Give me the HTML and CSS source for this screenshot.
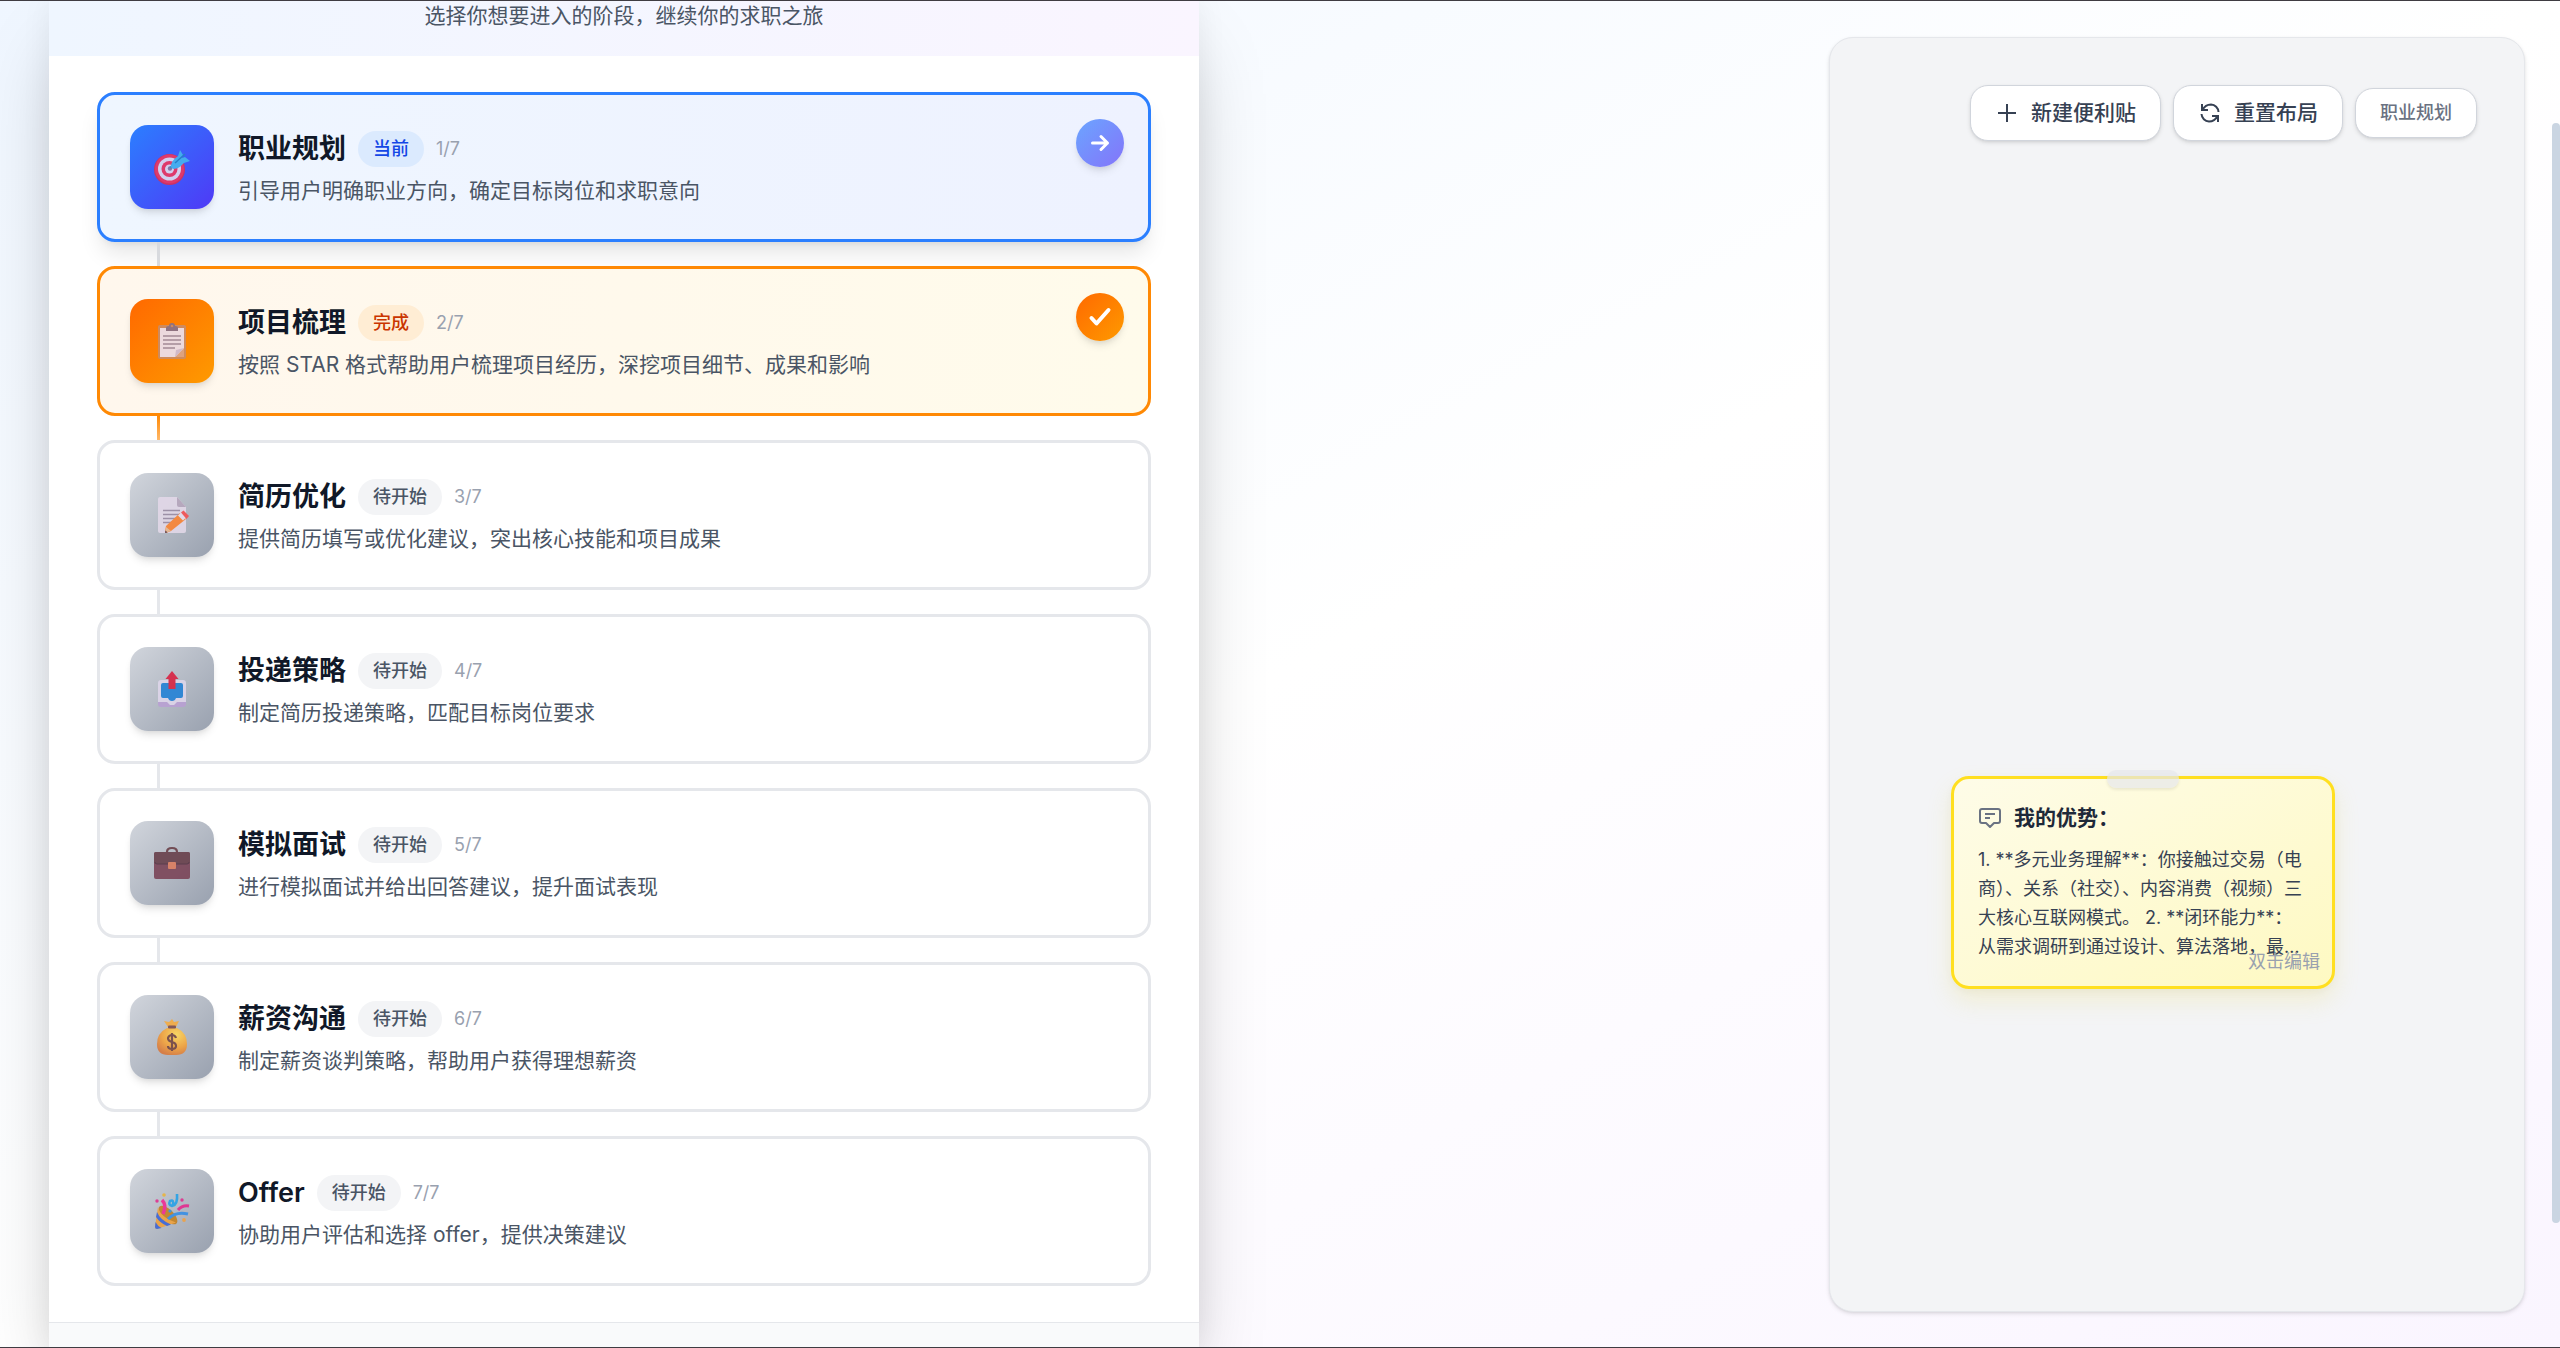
FILE: index.html
```html
<!DOCTYPE html>
<html lang="zh-CN">
<head>
<meta charset="utf-8">
<meta name="viewport" content="width=device-width, initial-scale=1">
<title>求职阶段</title>
<link rel="stylesheet" href="styles.css">
</head>
<body>
<div class="page">
  <main class="panel">
    <header class="panel-head"><p>选择你想要进入的阶段，继续你的求职之旅</p></header>
    <ol class="stages">
      <li class="stage current">
        <span class="icon"><svg viewBox="0 0 36 36" aria-hidden="true">
          <ellipse cx="15.500" cy="20.500" rx="15.500" ry="15.500" fill="#d92f55"/><circle cx="15.500" cy="20" r="14.500" fill="#f0365d"/><circle cx="15.500" cy="20" r="11.500" fill="#e3dcee"/><circle cx="15.500" cy="20" r="8" fill="#f0365d"/><circle cx="15.500" cy="20" r="4.500" fill="#e3dcee"/><circle cx="16" cy="19.500" r="2.200" fill="#8d7c9c"/>
          <path d="M16 19 28 7" stroke="#3b8fc4" stroke-width="2"/><path d="M17 18c0-5 3-8 7-11l2-6 3 5-1 3 3-1 5 4-6 2c-3 3-6 6-11 6z" fill="#45b5ee"/><path d="m21 14 10-9" stroke="#2383c4" stroke-width="1.500"/></svg></span>
        <div class="body"><div class="row"><h2>职业规划</h2><span class="badge">当前</span><span class="count">1/7</span></div><p>引导用户明确职业方向，确定目标岗位和求职意向</p></div>
        <button class="mark" type="button" aria-label="进入职业规划"><svg viewBox="0 0 24 24" aria-hidden="true"><path d="M4.500 12h15M13 5.500l6.500 6.500-6.500 6.500"/></svg></button>
      </li>
      <li class="stage done">
        <span class="icon"><svg viewBox="0 0 36 36" aria-hidden="true">
          <rect x="4" y="2" width="28" height="34" rx="2" fill="#c98c69"/><path d="M6 5h24v21l-8 8H6z" fill="#ebe3f5"/><path d="M30 25v9h-9z" fill="#dba58c"/><path d="m21 34 1-7 8-2z" fill="#cdbfdf"/><path d="M12 8V5q0-2 3-2 0-3 3-3t3 3q3 0 3 2v3z" fill="#83718e"/><circle cx="18" cy="3" r="1.300" fill="#c98c69"/><path d="M9 13h18M9 17h18M9 21h18M9 25h12" stroke="#9a8ca7" stroke-width="1.300"/></svg></span>
        <div class="body"><div class="row"><h2>项目梳理</h2><span class="badge">完成</span><span class="count">2/7</span></div><p>按照 STAR 格式帮助用户梳理项目经历，深挖项目细节、成果和影响</p></div>
        <span class="mark"><svg viewBox="0 0 24 24" aria-hidden="true"><path class="tick" d="m3.500 13 5 5.500L20.500 5"/></svg></span>
      </li>
      <li class="stage">
        <span class="icon"><svg viewBox="0 0 36 36" aria-hidden="true">
          <path d="M4 2q0-2 2-2h17l9 10v24q0 2-2 2H6q-2 0-2-2z" fill="#e2d8e8"/><path d="M23 0v8q0 2 2 2h7z" fill="#b6a6bd"/><path d="M9 13.500h17M9 17.500h17M9 21.500h14M9 25.500h9" stroke="#9a8ca4" stroke-width="1.300"/><path d="m11 34 1-5 14-13 6 6-15 12-5 2z" fill="#fb8434"/><path d="m11 36 1-6 5 4z" fill="#e8b891"/><path d="m11 36 .5-2.500 2 2z" fill="#50333f"/><path d="m24 18.500 3.500-3.500 5 5-3.500 3.500z" fill="#e7e0f0"/><path d="m27 15.500 2.500-2 5.500 5.500-2.500 3z" fill="#f45253"/></svg></span>
        <div class="body"><div class="row"><h2>简历优化</h2><span class="badge">待开始</span><span class="count">3/7</span></div><p>提供简历填写或优化建议，突出核心技能和项目成果</p></div>
      </li>
      <li class="stage">
        <span class="icon"><svg viewBox="0 0 36 36" aria-hidden="true">
          <path d="M4 26h28v7q0 3-3 3H7q-3 0-3-3z" fill="#b9a0d3"/><path d="M4 12q0-3 3-3h22q3 0 3 3v19h-9l-3 3h-4l-3-3H4z" fill="#ded6ea"/><path d="M7 14q0-2 2-2h18q2 0 2 2v11q0 2-2 2h-5q-1 3-4 3t-4-3H9q-2 0-2-2z" fill="#2482d6"/><path d="m18 0 6.500 8h-3v10h-7V8h-3z" fill="#d92343"/></svg></span>
        <div class="body"><div class="row"><h2>投递策略</h2><span class="badge">待开始</span><span class="count">4/7</span></div><p>制定简历投递策略，匹配目标岗位要求</p></div>
      </li>
      <li class="stage">
        <span class="icon"><svg viewBox="0 0 36 36" aria-hidden="true">
          <path d="M13 8V7q0-4 5-4t5 4v1" fill="none" stroke="#6b4048" stroke-width="2.200"/><rect y="7" width="36" height="27" rx="2" fill="#7b4558"/><path d="M0 9q0-2 2-2h32q2 0 2 2v8q0 2-2 2H2q-2 0-2-2z" fill="#68404b"/><path d="M1 17q0 2 2 2h30q2 0 2-2" fill="none" stroke="#523041"/><rect x="14" y="17" width="8" height="7" rx="1" fill="#da7c5f"/></svg></span>
        <div class="body"><div class="row"><h2>模拟面试</h2><span class="badge">待开始</span><span class="count">5/7</span></div><p>进行模拟面试并给出回答建议，提升面试表现</p></div>
      </li>
      <li class="stage">
        <span class="icon"><svg viewBox="0 0 36 36" aria-hidden="true">
          <defs><radialGradient id="gold" cx=".65" cy=".25" r=".8"><stop offset="0" stop-color="#ffd95a"/><stop offset=".6" stop-color="#f3a33c"/><stop offset="1" stop-color="#d9783c"/></radialGradient></defs>
          <path d="m14 8-4-6 5 1 3-3 2 3 5-1-3 6z" fill="#f4ab42"/><path d="M13 9q-10 5-10 16 0 11 11 11h8q11 0 11-11 0-11-10-16z" fill="url(#gold)"/><rect x="14" y="6.500" width="8" height="3" rx="1" fill="#7b4b4d"/><path d="M22 19q-1-3-4-3t-4 3q0 3 4 4t4 4q0 3-4 3t-4-3M18 14v18" fill="none" stroke="#754641" stroke-width="2.200"/></svg></span>
        <div class="body"><div class="row"><h2>薪资沟通</h2><span class="badge">待开始</span><span class="count">6/7</span></div><p>制定薪资谈判策略，帮助用户获得理想薪资</p></div>
      </li>
      <li class="stage">
        <span class="icon"><svg viewBox="0 0 36 36" aria-hidden="true">
          <ellipse cx="14" cy="22" rx="12" ry="5.500" transform="rotate(45 14 22)" fill="#c58222"/><path d="M4 14q2 10 18 15.500L3 36q-2 0-2-2z" fill="#efa13d"/><path d="M3 19q3 8 14 12.500l-4 1.500Q6 30 2 24zM1.500 29q2 4 6 6L3 36q-2 0-2-2z" fill="#3c65d8"/><path d="M8 7q5 5 1 14" fill="none" stroke="#f12b93" stroke-width="3.500"/><path d="M14 26q8-8 20-5" fill="none" stroke="#368fe6" stroke-width="3"/><path d="M23 1q1 11-5 12-4-1-2-5 4-2 3 4" fill="none" stroke="#25a2e8" stroke-width="2.600"/><path d="M24 17q4-5 11-4" fill="none" stroke="#e42b8e" stroke-width="3"/><circle cx="10" cy="2" r="1.800" fill="#eab43c"/><circle cx="3" cy="8" r="1.700" fill="#df318e"/><circle cx="28" cy="7" r="1.700" fill="#df318e"/><circle cx="16" cy="18" r="1.600" fill="#3292e4"/><circle cx="30" cy="27" r="1.900" fill="#eea246"/></svg></span>
        <div class="body"><div class="row"><h2>Offer</h2><span class="badge">待开始</span><span class="count">7/7</span></div><p>协助用户评估和选择 offer，提供决策建议</p></div>
      </li>
    </ol>
    <footer class="panel-foot"></footer>
  </main>
  <section class="board" aria-label="便利贴">
    <div class="tools">
      <button class="tool" type="button"><svg viewBox="0 0 24 24" aria-hidden="true"><path d="M12 3v18M3 12h18"/></svg>新建便利贴</button>
      <button class="tool" type="button"><svg viewBox="0 0 24 24" aria-hidden="true"><path d="M4 3v6h6M20 21v-6h-6M4.500 9C7 4 11 3.500 13 3.500A8 8 0 0 1 20.500 11M3.500 13A8 8 0 0 0 11 20.500c2 0 6-.5 8.500-5.500"/></svg>重置布局</button>
      <span class="chip">职业规划</span>
    </div>
    <article class="note">
      <span class="tape"></span>
      <h3><svg viewBox="0 0 24 24" aria-hidden="true"><path d="M4 3h16a2 2 0 0 1 2 2v10a2 2 0 0 1-2 2h-4l-4 4-4-4H4a2 2 0 0 1-2-2V5a2 2 0 0 1 2-2zM7 8h10M7 12h5"/></svg>我的优势：</h3>
      <p>1. **多元业务理解**：你接触过交易（电<br>商）、关系（社交）、内容消费（视频）三<br>大核心互联网模式。 2. **闭环能力**：<br>从需求调研到通过设计、算法落地，最…</p>
      <span class="hint">双击编辑</span>
    </article>
  </section>
</div>
<div class="scroll-thumb"></div>
</body>
</html>
```

FILE: styles.css
```css
* { box-sizing: border-box; }
body {
  margin: 0;
  font-family: Inter, "Noto Sans CJK SC", sans-serif;
  font-size: 21px;
  line-height: 30px;
  color: #4a5565;
}
h2, h3, p, ol { margin: 0; padding: 0; }
svg { display: block; flex: none; }
.page {
  display: grid;
  grid-template-columns: minmax(0, 1150fr) minmax(0, 630fr) minmax(0, 696fr);
  min-height: 100vh;
  padding: 0 35px 0 49px;
  overflow: hidden;
  border: solid #3f3c42;
  border-width: 1px 0;
  background: linear-gradient(to bottom right, #eff6ff, #fff 50%, #faf5ff);
}
.panel {
  display: flex;
  flex-direction: column;
  background: #fff;
  box-shadow: 0 38px 75px -18px rgba(0, 0, 0, .25), 0 0 30px rgba(0, 0, 0, .06);
}
.panel-head {
  padding-bottom: 25px;
  text-align: center;
  background: linear-gradient(to right, #eff6ff, #faf5ff);
}
.stages {
  display: flex;
  flex-direction: column;
  gap: 24px;
  padding: 36px 48px;
  list-style: none;
}
.stage {
  position: relative;
  display: flex;
  align-items: flex-start;
  gap: 24px;
  min-height: 150px;
  padding: 30px;
  border: 3px solid #e5e7eb;
  border-radius: 18px;
  background: #fff;
}
.stage:not(:last-child)::after {
  content: "";
  position: absolute;
  left: 57px;
  top: calc(100% + 3px);
  width: 3px;
  height: 24px;
  background: #e5e7eb;
}
.icon {
  display: grid;
  place-items: center;
  flex: none;
  width: 84px;
  height: 84px;
  border-radius: 18px;
  background: linear-gradient(to bottom right, #d1d5dc, #99a1af);
  box-shadow: 0 6px 9px -2px rgba(0, 0, 0, .1), 0 3px 6px -3px rgba(0, 0, 0, .1);
}
.icon svg { width: 36px; height: 36px; opacity: .9; }
.body { padding-top: 3px; }
.row { display: flex; align-items: center; gap: 12px; margin-bottom: 6px; }
h2 { font-size: 27px; line-height: 42px; font-weight: 600; color: #101828; }
.badge {
  padding: 6px 15px;
  border-radius: 18px;
  background: #f3f4f6;
  font-size: 18px;
  line-height: 24px;
  font-weight: 500;
}
.count { font-size: 18px; line-height: 24px; color: #99a1af; }
.mark {
  position: absolute;
  top: 24px;
  right: 24px;
  display: grid;
  place-items: center;
  width: 48px;
  height: 48px;
  padding: 0;
  border: 0;
  border-radius: 50%;
  box-shadow: 0 6px 9px -2px rgba(0, 0, 0, .1), 0 3px 6px -3px rgba(0, 0, 0, .1);
}
.mark svg { width: 24px; height: 24px; fill: none; stroke: #fff; stroke-width: 3; stroke-linecap: round; stroke-linejoin: round; }
.mark .tick { stroke-width: 4; }
.current {
  border-color: #2b7fff;
  background: linear-gradient(to right, #eff6ff, #eef2ff);
  box-shadow: 0 15px 22px -4px rgba(0, 0, 0, .1), 0 6px 9px -6px rgba(0, 0, 0, .1);
}
.stage.current::after { background: #d8dade; }
.current .icon { background: linear-gradient(to bottom right, #2b7fff, #4f39f6); }
.current .badge { background: #dbeafe; color: #1447e6; }
.current .mark { background: linear-gradient(to bottom right, #6ba5ff, #8474fa); }
.done { border-color: #ff8904; background: linear-gradient(to right, #fff7ed, #fffbeb); }
.stage.done:not(:last-child)::after { background: linear-gradient(#ff8904, #ffb86a); }
.done .icon, .done .mark { background: linear-gradient(to bottom right, #ff6900, #fe9a00); }
.done .badge { background: #ffedd4; color: #ca3500; }
.stage.current:not(:last-child)::after { background: #d8dade; }
.panel-foot { flex: 1; border-top: 1px solid #e5e7eb; background: #f9fafb; }
.board {
  position: relative;
  grid-column: 3;
  margin: 36px 0 35px;
  padding: 47px;
  border: 1px solid #e5e7eb;
  border-radius: 24px;
  background: #f3f4f6;
  box-shadow: 0 2px 4px rgba(0, 0, 0, .1), 0 1px 3px -1px rgba(0, 0, 0, .1);
}
.tools { display: flex; justify-content: flex-end; align-items: center; gap: 12px; }
.tool, .chip {
  border: 1px solid #d1d5dc;
  border-radius: 18px;
  background: #fff;
  font-family: inherit;
  font-weight: 500;
  white-space: nowrap;
  box-shadow: 0 2px 4px rgba(0, 0, 0, .1), 0 1px 3px -1px rgba(0, 0, 0, .1);
}
.tool {
  display: flex;
  align-items: center;
  gap: 12px;
  padding: 12px 24px;
  font-size: 21px;
  line-height: 30px;
  color: #364153;
}
.tool svg { width: 24px; height: 24px; fill: none; stroke: currentColor; stroke-width: 2; }
.chip { padding: 12px 24px; font-size: 18px; line-height: 24px; color: #6a7282; }
.note {
  position: absolute;
  left: 121px;
  top: 738px;
  width: 384px;
  height: 213px;
  padding: 24px;
  border: 3px solid #ffdf20;
  border-radius: 18px;
  background: linear-gradient(to bottom right, #fefce8, #fef9c2);
  box-shadow: 0 12px 24px rgba(240, 215, 60, .18), 0 3px 9px rgba(0, 0, 0, .04);
}
.tape {
  position: absolute;
  top: -9px;
  left: 50%;
  width: 72px;
  height: 18px;
  margin-left: -36px;
  border-radius: 9px;
  background: rgba(229, 231, 235, .7);
  box-shadow: 0 2px 3px rgba(0, 0, 0, .08);
}
.note h3 {
  display: flex;
  align-items: center;
  gap: 12px;
  margin-bottom: 12px;
  font-size: 21px;
  line-height: 30px;
  font-weight: 600;
  color: #1e2939;
}
.note h3 svg { width: 24px; height: 24px; fill: none; stroke: #6a7282; stroke-width: 2; stroke-linejoin: round; }
.note p { font-size: 18px; line-height: 29px; color: #364153; white-space: nowrap; }
.hint { position: absolute; right: 12px; bottom: 12px; font-size: 18px; line-height: 24px; color: #99a1af; }
.scroll-thumb {
  position: fixed;
  top: 123px;
  right: 0;
  width: 8px;
  height: 1100px;
  border-radius: 4px;
  background: #cad5e2;
}
```
